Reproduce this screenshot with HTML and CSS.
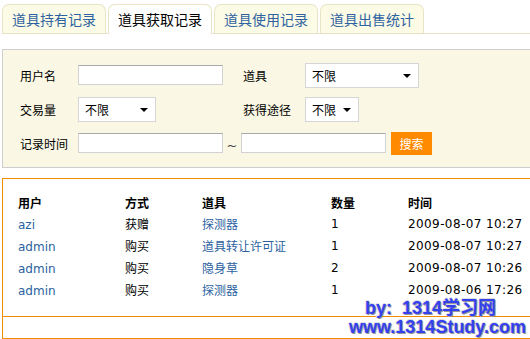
FILE: index.html
```html
<!DOCTYPE html>
<html lang="zh-CN">
  <head>
    <meta charset="UTF-8" />
    <title>道具获取记录</title>
    <link rel="stylesheet" href="styles.css">
  </head>
  <body>
    <div class="page">
      <ul class="tabs">
        <li class="tab">道具持有记录</li>
        <li class="tab active">道具获取记录</li>
        <li class="tab">道具使用记录</li>
        <li class="tab">道具出售统计</li>
      </ul>

      <div class="search">
        <div class="row">
          <span class="label">用户名</span>
          <div class="cell"><input class="txt" type="text" /></div>
          <span class="label label2">道具</span>
          <div class="fake-select wide">不限<i class="arrow"></i></div>
        </div>
        <div class="row">
          <span class="label">交易量</span>
          <div class="cell"><div class="fake-select">不限<i class="arrow"></i></div></div>
          <span class="label label2">获得途径</span>
          <div class="fake-select small">不限<i class="arrow"></i></div>
        </div>
        <div class="row">
          <span class="label">记录时间</span>
          <input class="txt" type="text" />
          <span class="tilde">~</span>
          <input class="txt" type="text" />
          <button class="btn">搜索</button>
        </div>
      </div>

      <div class="result">
        <table class="list">
          <tr class="head">
            <th class="c-user">用户</th>
            <th class="c-way">方式</th>
            <th class="c-item">道具</th>
            <th class="c-num">数量</th>
            <th>时间</th>
          </tr>
          <tr>
            <td><a href="#">azi</a></td>
            <td>获赠</td>
            <td><a href="#">探测器</a></td>
            <td class="num">1</td>
            <td class="num">2009-08-07 10:27</td>
          </tr>
          <tr>
            <td><a href="#">admin</a></td>
            <td>购买</td>
            <td><a href="#">道具转让许可证</a></td>
            <td class="num">1</td>
            <td class="num">2009-08-07 10:27</td>
          </tr>
          <tr>
            <td><a href="#">admin</a></td>
            <td>购买</td>
            <td><a href="#">隐身草</a></td>
            <td class="num">2</td>
            <td class="num">2009-08-07 10:26</td>
          </tr>
          <tr>
            <td><a href="#">admin</a></td>
            <td>购买</td>
            <td><a href="#">探测器</a></td>
            <td class="num">1</td>
            <td class="num">2009-08-06 17:26</td>
          </tr>
        </table>
        <div class="pages"></div>
      </div>

      <div class="mark">
        <div class="mark-line1">by:&nbsp; 1314学习网</div>
        <div class="mark-line2">www.1314Study.com</div>
      </div>
    </div>
  </body>
</html>
```

FILE: styles.css
```css
body {
  margin: 0;
  width: 530px;
  height: 339px;
  overflow: hidden;
  font-family: "Noto Sans CJK SC", sans-serif;
  font-size: 12px;
  color: #000;
  background: #fff;
}

.page {
  position: relative;
  width: 560px;
  padding: 4px 0 0 2px;
}

/* tabs */
.tabs {
  list-style: none;
  margin: 0;
  padding: 0;
  display: flex;
  gap: 2px;
  border-bottom: 1px solid #e6e2c6;
}

.tab {
  width: 102px;
  height: 28px;
  line-height: 28px;
  text-align: center;
  font-size: 14px;
  color: #2f63a0;
  background: #fbfbe6;
  border: 1px solid #e8e4c6;
  border-bottom: none;
  border-radius: 7px 7px 0 0;
}

.tab.active {
  background: #fff;
  color: #000;
  height: 29px;
  margin-bottom: -1px;
}

/* search panel */
.search {
  margin-top: 15px;
  background: #faf7e4;
  border: 1px solid #cfcfcf;
  border-right: none;
  padding: 8px 0 7px 17px;
}

.row {
  display: flex;
  align-items: center;
  height: 34px;
}

.label {
  width: 58px;
}

.label2 {
  width: 62px;
}

.cell {
  width: 165px;
}

.txt {
  box-sizing: border-box;
  width: 145px;
  height: 20px;
  margin: 0;
  border: 1px solid #d3d3d3;
  border-top-color: #a9a9a9;
  background: #fff;
}

.fake-select {
  box-sizing: border-box;
  position: relative;
  width: 78px;
  height: 25px;
  line-height: 23px;
  padding-left: 6px;
  border: 1px solid #d6d6d6;
  background: #fff;
}

.fake-select.wide {
  width: 114px;
}

.fake-select.small {
  width: 54px;
}

.arrow {
  position: absolute;
  right: 7px;
  top: 10px;
  border-left: 4px solid transparent;
  border-right: 4px solid transparent;
  border-top: 4px solid #000;
}

.tilde {
  width: 18px;
  text-align: center;
  font-family: "DejaVu Sans", sans-serif;
  font-size: 13px;
  color: #444;
  padding-top: 5px;
}

.btn {
  margin-left: 5px;
  width: 41px;
  height: 23px;
  border: none;
  background: #ff8a00;
  color: #fff;
  font-family: "Noto Sans CJK SC", sans-serif;
  font-size: 12px;
  padding: 0;
}

/* result list */
.result {
  margin-top: 10px;
  border: 1px solid #f28c00;
  border-right: none;
  height: 159px;
}

.list {
  border-collapse: collapse;
  margin: 14px 0 0 15px;
}

.list th,
.list td {
  height: 22px;
  line-height: 16px;
  padding: 0;
  text-align: left;
  vertical-align: middle;
}

.list .head th {
  height: 20px;
  font-weight: bold;
}

.c-user { width: 107px; }
.c-way { width: 77px; }
.c-item { width: 129px; }
.c-num { width: 77px; }

.list a {
  color: #2b5fa0;
  text-decoration: none;
  font-family: "DejaVu Sans", "Noto Sans CJK SC", sans-serif;
}

.num {
  font-family: "DejaVu Sans", sans-serif;
  letter-spacing: 0.4px;
}

.pages {
  margin-top: 15px;
  border-top: 1px solid #f28c00;
}

/* watermark */
.mark {
  position: absolute;
  left: 349px;
  top: 299px;
  font-family: "Liberation Sans", "Noto Sans CJK SC", sans-serif;
  font-weight: bold;
  font-size: 18px;
  color: #3340f0;
  text-shadow: 1px 1px 0 #999, -1px 0 0 #ddd, 0 -1px 0 #ddd;
  line-height: 19px;
}

.mark-line1 {
  padding-left: 16px;
}
```
